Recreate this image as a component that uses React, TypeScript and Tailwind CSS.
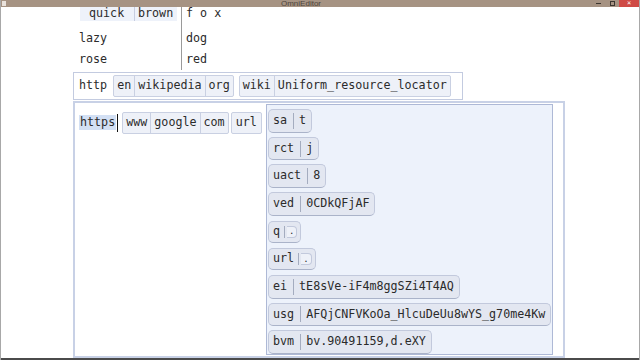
import React from "react";

const mono = "font-['DejaVu_Sans_Mono',monospace] text-[11.7px] text-[#2b2b2b]";

function Cells({ items, className = "" }: { items: string[]; className?: string }) {
  return (
    <div className={`flex h-[22px] items-stretch border border-[#c9d0e2] bg-[#eef1f8] rounded-[2px] ${className}`}>
      {items.map((t, i) => (
        <span
          key={i}
          className={`flex items-center px-[3px] leading-none ${i > 0 ? "border-l border-[#c9d0e2]" : ""}`}
        >
          {t}
        </span>
      ))}
    </div>
  );
}

function Pair({ k, v, tab }: { k: string; v: string; tab?: boolean }) {
  if (tab) {
    return (
      <div className="flex h-[24px] items-center">
        <div className="flex h-[22px] items-center rounded-[5px] border border-[#c2c9dc] border-b-[#aab3c9] bg-[#e3e7f1] pl-[4px] pr-[3px]">
          <span className="leading-none">{k}</span>
          <span className="ml-[4px] h-[12px] w-px bg-[#a4acbf]" />
          <span className="ml-[2px] flex h-[12px] items-center rounded-r-[4px] border border-l-0 border-[#c2c9dc] bg-[#eef1f8] px-[2px] text-[9px] leading-none">
            {v}
          </span>
        </div>
      </div>
    );
  }
  return (
    <div className="flex h-[24px] w-fit items-center rounded-[5px] border border-[#c2c9dc] border-b-[#aab3c9] bg-[#e3e7f1]">
      <span className="pl-[4px] pr-[6px] leading-none">{k}</span>
      <span className="h-[16px] w-px bg-[#a4acbf]" />
      <span className="pl-[5px] pr-[5px] leading-none">{v}</span>
    </div>
  );
}

const pairs: { k: string; v: string; tab?: boolean }[] = [
  { k: "sa", v: "t" },
  { k: "rct", v: "j" },
  { k: "uact", v: "8" },
  { k: "ved", v: "0CDkQFjAF" },
  { k: "q", v: ".", tab: true },
  { k: "url", v: ".", tab: true },
  { k: "ei", v: "tE8sVe-iF4m8ggSZi4T4AQ" },
  { k: "usg", v: "AFQjCNFVKoOa_HlcuDeUu8wYS_g70me4Kw" },
  { k: "bvm", v: "bv.90491159,d.eXY" },
];

export default function App() {
  return (
    <div className={`flex h-[360px] w-[640px] flex-col overflow-hidden border-x border-[#a8a8a8] bg-white ${mono}`}>
      {/* title bar */}
      <div className="relative z-10 flex h-[7px] shrink-0 items-center bg-[#a69383]">
        <span className="ml-[1px] h-[5px] w-[4px] bg-[#e9e2dc]" />
        <span className="flex-1 text-center font-['Liberation_Sans',sans-serif] text-[8px] leading-[7px] text-[#4d443c]">
          OmniEditor
        </span>
        <span className="mr-[9px] h-px w-[5px] self-center bg-[#3c3630]" />
        <span className="mr-[4px] h-[5px] w-[5px] border border-[#3c3630]" />
        <span className="flex h-[7px] w-[20px] items-center justify-center bg-[#cf4a45] text-[7px] leading-none text-white">
          ×
        </span>
      </div>

      <div className="flex flex-col pl-[72px]">
        {/* table rows */}
        <div className="-mt-[2px] flex h-[65px]">
          <div className="w-[109px] border-r border-[#9a9a9a]">
            <div className="ml-[7px] flex h-[16px] w-[97px] bg-[#eef2fa] leading-[16px]">
              <span className="w-[55px] border-r border-[#c7cde0] pl-[9px]">quick</span>
              <span className="pl-[3px]">brown</span>
            </div>
            <div className="mt-[7px] h-[20px] pl-[6px] leading-[20px]">lazy</div>
            <div className="mt-[1px] h-[20px] pl-[6px] leading-[20px]">rose</div>
          </div>
          <div className="pl-[4px]">
            <div className="h-[16px] leading-[16px]">f o x</div>
            <div className="mt-[7px] h-[20px] leading-[20px]">dog</div>
            <div className="mt-[1px] h-[20px] leading-[20px]">red</div>
          </div>
        </div>

        {/* http row */}
        <div className="mt-[2px] flex h-[28px] w-[390px] items-center border border-[#c3cbe0]">
          <span className="pl-[5px] pr-[6px] leading-none">http</span>
          <Cells items={["en", "wikipedia", "org"]} />
          <Cells items={["wiki", "Uniform_resource_locator"]} className="ml-[5px]" />
        </div>

        {/* big box */}
        <div className="mt-[1px] flex h-[257px] w-[492px] border-[2px] border-[#c8d1e6] pr-[9px]">
          <div className="mt-[9px] flex h-[21px] w-[191px] shrink-0 items-center self-start pl-[4px]">
            <span className="flex h-[15px] items-center bg-[#d3e0f4] px-[1px] leading-none">https</span>
            <span className="ml-[1px] h-[18px] w-px bg-[#111]" />
            <Cells items={["www", "google", "com"]} className="ml-[4px] [&>span]:px-[3px]" />
            <Cells items={["url"]} className="ml-[2px] [&>span]:px-[4px]" />
          </div>
          <div className="my-[1px] flex w-[287px] flex-col gap-[4px] border border-[#aeb9d6] bg-[#edf2fb] pl-[1px] pt-[4px]">
            {pairs.map((p) => (
              <Pair key={p.k} k={p.k} v={p.v} tab={p.tab} />
            ))}
          </div>
        </div>
      </div>
      <div className="mt-auto h-[2px] shrink-0 bg-[#4b4b4b]" />
    </div>
  );
}
